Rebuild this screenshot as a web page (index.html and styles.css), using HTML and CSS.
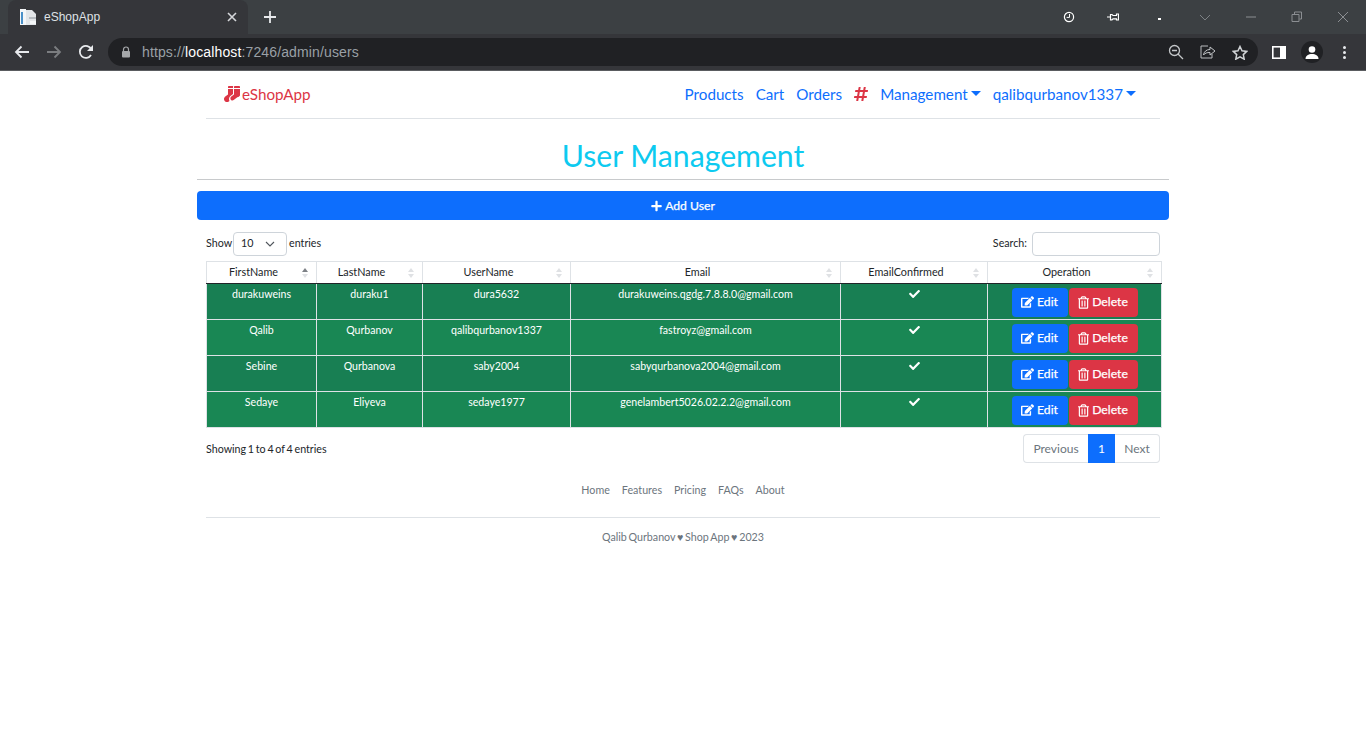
FILE: index.html
```html
<!DOCTYPE html>
<html lang="en">
<head>
<meta charset="utf-8">
<title>eShopApp</title>
<link rel="stylesheet" href="styles.css">
</head>
<body>
<svg class="sprites" xmlns="http://www.w3.org/2000/svg">
  <symbol id="i-socks" viewBox="0 0 512 512"><path fill="currentColor" d="M214.66 311.01L288 256V96H128v176l-86.65 64.61c-39.4 29.56-53.86 84.42-29.21 127.06C30.39 495.25 63.27 512 96.08 512c20.03 0 40.25-6.25 57.52-19.2l21.86-16.39c-29.85-55.38-13.54-125.84 39.2-165.4zM288 32c0-11.05 3.07-21.3 8.03-30.38C293.04.83 289.95 0 286.66 0H160c-17.67 0-32 14.33-32 32v32h160V32zM480 0H352c-17.67 0-32 14.33-32 32v32h192V32c0-17.67-14.33-32-32-32zM320 272l-86.4 64.8c-25.54 19.17-36.6 53.75-24.65 83.21 16.7 41.15 66.3 53.94 101.45 27.59l115.2-86.4A127.997 127.997 0 0 0 512 304V96H320v176z"/></symbol>
  <symbol id="i-hash" viewBox="0 0 448 512"><path fill="currentColor" d="M440.667 182.109l7.143-40c1.313-7.355-4.342-14.109-11.813-14.109h-74.81l14.623-81.891C377.123 38.754 371.468 32 363.997 32h-40.632a12 12 0 0 0-11.813 9.891L296.175 128H197.54l14.623-81.891C213.477 38.754 207.822 32 200.35 32h-40.632a12 12 0 0 0-11.813 9.891L132.528 128H53.432a12 12 0 0 0-11.813 9.891l-7.143 40C33.163 185.246 38.818 192 46.289 192h74.81L98.242 320H19.146a12 12 0 0 0-11.813 9.891l-7.143 40C-1.123 377.246 4.532 384 12.003 384h74.81L72.19 465.891C70.877 473.246 76.532 480 84.003 480h40.632a12 12 0 0 0 11.813-9.891L151.826 384h98.634l-14.623 81.891C234.523 473.246 240.178 480 247.65 480h40.632a12 12 0 0 0 11.813-9.891L315.472 384h79.096a12 12 0 0 0 11.813-9.891l7.143-40c1.313-7.355-4.342-14.109-11.813-14.109h-74.81l22.857-128h79.096a12 12 0 0 0 11.813-9.891zM261.889 320h-98.634l22.857-128h98.634l-22.857 128z"/></symbol>
  <symbol id="i-edit" viewBox="0 0 576 512"><path fill="currentColor" d="M402.6 83.2l90.2 90.2c3.8 3.8 3.8 10 0 13.8L274.4 405.6l-92.8 10.3c-12.4 1.4-22.9-9.1-21.5-21.5l10.3-92.8L388.8 83.2c3.8-3.8 10-3.8 13.8 0zm162-22.9l-48.8-48.8c-15.2-15.2-39.9-15.2-55.2 0l-35.4 35.4c-3.8 3.8-3.8 10 0 13.8l90.2 90.2c3.8 3.8 10 3.8 13.8 0l35.4-35.4c15.2-15.3 15.2-40 0-55.2zM384 346.2V448H64V128h229.8c3.2 0 6.2-1.3 8.5-3.5l40-40c7.6-7.6 2.2-20.5-8.5-20.5H48C21.5 64 0 85.5 0 112v352c0 26.5 21.5 48 48 48h352c26.5 0 48-21.5 48-48V306.2c0-10.7-12.9-16-20.5-8.5l-40 40c-2.2 2.3-3.5 5.3-3.5 8.5z"/></symbol>
  <symbol id="i-trash" viewBox="0 0 448 512"><path fill="currentColor" d="M268 416h24a12 12 0 0 0 12-12V188a12 12 0 0 0-12-12h-24a12 12 0 0 0-12 12v216a12 12 0 0 0 12 12zM432 80h-82.41l-34-56.7A48 48 0 0 0 274.41 0H173.59a48 48 0 0 0-41.16 23.3L98.41 80H16A16 16 0 0 0 0 96v16a16 16 0 0 0 16 16h16v336a48 48 0 0 0 48 48h288a48 48 0 0 0 48-48V128h16a16 16 0 0 0 16-16V96a16 16 0 0 0-16-16zM171.84 50.91A6 6 0 0 1 177 48h94a6 6 0 0 1 5.15 2.91L293.61 80H154.39zM368 464H80V128h288zm-212-48h24a12 12 0 0 0 12-12V188a12 12 0 0 0-12-12h-24a12 12 0 0 0-12 12v216a12 12 0 0 0 12 12z"/></symbol>
  <symbol id="i-check" viewBox="0 0 512 512"><path fill="currentColor" d="M173.898 439.404l-166.4-166.4c-9.997-9.997-9.997-26.206 0-36.204l36.203-36.204c9.997-9.998 26.207-9.998 36.204 0L192 312.69 432.095 72.596c9.997-9.997 26.207-9.997 36.204 0l36.203 36.204c9.997 9.997 9.997 26.206 0 36.204l-294.4 294.401c-9.998 9.997-26.207 9.997-36.204-.001z"/></symbol>
  <symbol id="i-plus" viewBox="0 0 448 512"><path fill="currentColor" d="M416 208H272V64c0-17.67-14.33-32-32-32h-32c-17.67 0-32 14.33-32 32v144H32c-17.67 0-32 14.33-32 32v32c0 17.67 14.33 32 32 32h144v144c0 17.67 14.33 32 32 32h32c17.67 0 32-14.33 32-32V304h144c17.67 0 32-14.33 32-32v-32c0-17.67-14.33-32-32-32z"/></symbol>
</svg>
<div class="browser">
  <div class="tabstrip">
    <div class="tab">
      <svg class="tab-icon" width="16" height="16" viewBox="0 0 16 16"><rect x="0" y="0" width="6" height="16" fill="#f4f6f8"/><rect x="1" y="3" width="2" height="12" fill="#4a90c8"/><path d="M6 1h6l4 4v11H6z" fill="#e3e6e9"/><rect x="9" y="8" width="7" height="2" fill="#b8bdc2"/><rect x="10" y="12" width="6" height="3" fill="#f4f6f8"/></svg>
      <span class="tab-title">eShopApp</span>
      <svg class="tab-close" width="10" height="10" viewBox="0 0 10 10"><path d="M1 1l8 8M9 1l-8 8" stroke="#d5d7da" stroke-width="1.6"/></svg>
    </div>
    <svg class="new-tab" width="14" height="14" viewBox="0 0 14 14"><path d="M7 1v12M1 7h12" stroke="#e8eaed" stroke-width="1.8"/></svg>
    <div class="win-controls">
      <svg class="wi-clock" width="12" height="12" viewBox="0 0 12 12"><circle cx="6" cy="6" r="4.6" fill="none" stroke="#fff" stroke-width="1.2"/><path d="M6.5 3v3.4H3.6" fill="none" stroke="#fff" stroke-width="1"/></svg>
      <svg class="wi-pin" width="12" height="10" viewBox="0 0 12 10"><path d="M0 5h3.500M3.500 2.500h1.500l1 1h3.500V2h2v6h-2V6.800H6l-1 1H3.500z" fill="none" stroke="#fff" stroke-width="1.200"/></svg>
      <span class="wi-dot"></span>
      <svg class="wi-chev" width="12" height="7" viewBox="0 0 12 7"><path d="M1 1l5 5 5-5" fill="none" stroke="#7d8185" stroke-width="1"/></svg>
      <svg class="wi-min" width="12" height="2" viewBox="0 0 12 2"><path d="M1 1h10" stroke="#8b8e92" stroke-width="1"/></svg>
      <svg class="wi-max" width="12" height="12" viewBox="0 0 12 12"><path d="M1 3.500h7v7H1zM3.500 3V1h7v7H8.500" fill="none" stroke="#8b8e92" stroke-width="1"/></svg>
      <svg class="wi-x" width="12" height="12" viewBox="0 0 12 12"><path d="M1 1l10 10M11 1L1 11" stroke="#8b8e92" stroke-width="1"/></svg>
    </div>
  </div>
  <div class="toolbar">
    <svg class="tb-back" width="16" height="14" viewBox="0 0 16 14"><path d="M15 7H2M7.500 1.500L2 7l5.500 5.500" fill="none" stroke="#e8eaed" stroke-width="1.800"/></svg>
    <svg class="tb-fwd" width="16" height="14" viewBox="0 0 16 14"><path d="M1 7h13M8.500 1.500L14 7l-5.500 5.500" fill="none" stroke="#7b7d80" stroke-width="1.800"/></svg>
    <svg class="tb-reload" width="16" height="16" viewBox="0 0 16 16"><path d="M13 11a6 6 0 1 1 .3-5.600" fill="none" stroke="#e8eaed" stroke-width="1.800"/><path d="M15 1v6H9z" fill="#e8eaed"/></svg>
    <div class="omnibox">
      <svg class="lock" width="10" height="12" viewBox="0 0 10 12"><path d="M2.500 5V3.500a2.500 2.500 0 0 1 5 0V5" fill="none" stroke="#a5a7aa" stroke-width="1.200"/><rect x="1" y="5" width="8" height="6.500" rx="1" fill="#a5a7aa"/></svg>
      <span class="url">https://<b class="host">localhost</b>:7246/admin/users</span>
      <div class="omni-icons">
        <svg width="16" height="16" viewBox="0 0 16 16"><circle cx="6.500" cy="6.500" r="5" fill="none" stroke="#c4c7c9" stroke-width="1.300"/><path d="M4 6.500h5M10 10l5 5" stroke="#c4c7c9" stroke-width="1.300"/></svg>
        <svg width="16" height="14" viewBox="0 0 16 14"><path d="M8 1H1v12h11V9" fill="none" stroke="#b8bbbd" stroke-width="1"/><path d="M3.500 10c.5-3.500 3-5.500 6.500-5.500V2l5 4-5 4V7.500C7 7.500 5 8 3.500 10z" fill="#202124" stroke="#c4c7c9" stroke-width="1"/></svg>
        <svg width="16" height="15" viewBox="0 0 16 15"><path d="M8 1.500l2 4.300 4.700.6-3.400 3.200.9 4.600L8 11.900l-4.200 2.300.9-4.600L1.300 6.400 6 5.800z" fill="none" stroke="#d0d3d5" stroke-width="1.500"/></svg>
      </div>
    </div>
    <svg class="tb-side" width="14" height="13" viewBox="0 0 14 13"><rect x="0.800" y="0.800" width="12.400" height="11.400" fill="none" stroke="#fff" stroke-width="1.600"/><rect x="8" y="1" width="5" height="11" fill="#fff"/></svg>
    <div class="avatar"><svg width="14" height="13" viewBox="0 0 14 13"><circle cx="7" cy="3.500" r="3.300" fill="#fff"/><path d="M0.500 13c0-3.500 3-5 6.500-5s6.500 1.500 6.500 5z" fill="#fff"/></svg></div>
    <div class="kebab"><i></i><i></i><i></i></div>
  </div>
</div>

<div class="page">
  <nav class="navbar">
    <a class="brand">
      <svg class="socks"><use href="#i-socks"/></svg>
      <span>eShopApp</span>
    </a>
    <div class="nav-links">
      <a class="nav-link">Products</a>
      <a class="nav-link">Cart</a>
      <a class="nav-link">Orders</a>
      <a class="nav-link nav-hash"><svg class="hash"><use href="#i-hash"/></svg></a>
      <a class="nav-link caret">Management</a>
      <a class="nav-link caret">qalibqurbanov1337</a>
    </div>
  </nav>

  <h1 class="title">User Management</h1>
  <hr class="title-rule">
  <a class="add-btn">
    <svg class="ic-plus"><use href="#i-plus"/></svg>
    <span>Add User</span>
  </a>

  <div class="dt">
    <div class="dt-top">
      <label class="dt-length">Show <span class="select">10<svg class="sel-chev" width="10" height="6" viewBox="0 0 10 6"><path d="M1 1l4 4 4-4" fill="none" stroke="#50565c" stroke-width="1.100"/></svg></span> entries</label>
      <label class="dt-search">Search: <span class="search-input"></span></label>
    </div>
    <table class="users">
      <colgroup><col class="c1"><col class="c2"><col class="c3"><col class="c4"><col class="c5"><col class="c6"></colgroup>
      <thead>
        <tr>
          <th class="sort sort-asc">FirstName</th>
          <th class="sort">LastName</th>
          <th class="sort">UserName</th>
          <th class="sort">Email</th>
          <th class="sort">EmailConfirmed</th>
          <th class="sort">Operation</th>
        </tr>
      </thead>
      <tbody>
        <tr>
          <td>durakuweins</td><td>duraku1</td><td>dura5632</td><td>durakuweins.qgdg.7.8.8.0@gmail.com</td>
          <td><svg class="check"><use href="#i-check"/></svg></td>
          <td class="ops"><a class="btn btn-edit"><svg class="ic-edit"><use href="#i-edit"/></svg>Edit</a><a class="btn btn-del"><svg class="ic-trash"><use href="#i-trash"/></svg>Delete</a></td>
        </tr>
        <tr>
          <td>Qalib</td><td>Qurbanov</td><td>qalibqurbanov1337</td><td>fastroyz@gmail.com</td>
          <td><svg class="check"><use href="#i-check"/></svg></td>
          <td class="ops"><a class="btn btn-edit"><svg class="ic-edit"><use href="#i-edit"/></svg>Edit</a><a class="btn btn-del"><svg class="ic-trash"><use href="#i-trash"/></svg>Delete</a></td>
        </tr>
        <tr>
          <td>Sebine</td><td>Qurbanova</td><td>saby2004</td><td>sabyqurbanova2004@gmail.com</td>
          <td><svg class="check"><use href="#i-check"/></svg></td>
          <td class="ops"><a class="btn btn-edit"><svg class="ic-edit"><use href="#i-edit"/></svg>Edit</a><a class="btn btn-del"><svg class="ic-trash"><use href="#i-trash"/></svg>Delete</a></td>
        </tr>
        <tr>
          <td>Sedaye</td><td>Eliyeva</td><td>sedaye1977</td><td>genelambert5026.02.2.2@gmail.com</td>
          <td><svg class="check"><use href="#i-check"/></svg></td>
          <td class="ops"><a class="btn btn-edit"><svg class="ic-edit"><use href="#i-edit"/></svg>Edit</a><a class="btn btn-del"><svg class="ic-trash"><use href="#i-trash"/></svg>Delete</a></td>
        </tr>
      </tbody>
    </table>
    <div class="dt-bottom">
      <div class="dt-info">Showing 1 to 4 of 4 entries</div>
      <div class="pager">
        <a class="pg pg-prev">Previous</a>
        <a class="pg pg-on">1</a>
        <a class="pg pg-next">Next</a>
      </div>
    </div>
  </div>

  <footer class="footer">
    <div class="foot-links">
      <a>Home</a><a>Features</a><a>Pricing</a><a>FAQs</a><a>About</a>
    </div>
    <p class="foot-text">Qalib Qurbanov ♥ Shop App ♥ 2023</p>
  </footer>
</div>
</body>
</html>
```
FILE: styles.css
```css
* { box-sizing: border-box; }
html, body { margin: 0; padding: 0; background: #fff; }
body { font-family: Lato, "Liberation Sans", sans-serif; color: #212529; height: 738px; overflow: hidden; }
a { text-decoration: none; }
.sprites { display: none; }

.browser { height: 71px; background: #35363a; border-bottom: 1px solid #5a5c60; }
.tabstrip { height: 34px; background: #3c4043; display: flex; align-items: center; }
.tab { width: 240px; height: 34px; margin: 0 0 0 8px; background: #35363a; border-radius: 8px 8px 0 0; display: flex; align-items: center; padding: 0 0 0 12px; }
.tab-icon { margin-right: 8px; }
.tab-title { font: 12px "Liberation Sans", Arial, sans-serif; color: #dfe1e5; width: 183px; }
.new-tab { margin-left: 15px; }
.win-controls { margin-left: auto; display: flex; align-items: center; height: 34px; width: 306px; }
.wi-clock { margin-left: 3px; }
.wi-pin { margin-left: 32px; }
.wi-dot { width: 3px; height: 2px; background: #fff; margin-left: 39px; margin-top: 4px; }
.wi-chev { margin-left: 38px; }
.wi-min { margin-left: 34px; }
.wi-max { margin-left: 34px; }
.wi-x { margin-left: 34px; }

.toolbar { height: 36px; display: flex; align-items: center; }
.tb-back { margin-left: 14px; }
.tb-fwd { margin-left: 16px; }
.tb-reload { margin-left: 16px; }
.omnibox { width: 1150px; height: 28px; margin-left: 14px; background: #202124; border-radius: 14px; display: flex; align-items: center; padding: 0 10px 0 13px; }
.lock { margin-right: 11px; }
.url { font: 14px "Liberation Sans", Arial, sans-serif; color: #9aa0a6; letter-spacing: 0.13px; }
.host { font-weight: 400; color: #fff; }
.omni-icons { margin-left: auto; display: flex; align-items: center; gap: 16px; }
.tb-side { margin-left: 14px; }
.avatar { width: 22px; height: 22px; margin-left: 15px; border-radius: 50%; background: #202124; display: flex; align-items: center; justify-content: center; }
.kebab { margin-left: 20px; display: flex; flex-direction: column; gap: 2px; }
.kebab i { display: block; width: 3px; height: 3px; border-radius: 50%; background: #e8eaed; }

.page { width: 972px; margin: 0 auto; }
.navbar { margin: 0 9px; height: 48px; border-bottom: 1px solid #dee2e6; display: flex; align-items: center; justify-content: space-between; padding: 0 24px 2px 18px; }
.brand { display: flex; align-items: center; gap: 2px; color: #dc3545; font-size: 15.2px; }
.socks { width: 16px; height: 16px; color: #dc3545; }
.nav-links { display: flex; align-items: center; gap: 12px; font-size: 15.2px; }
.nav-link { color: #0d6efd; display: flex; align-items: center; }
.hash { width: 14px; height: 16px; color: #dc3545; display: block; }
.caret::after { content: ""; margin-left: 3px; border-top: 5px solid #0d6efd; border-left: 5px solid transparent; border-right: 5px solid transparent; }

.title { margin: 17px 0 0; height: 38px; line-height: 38px; font-size: 30.2px; font-weight: 400; color: #0dcaf0; text-align: center; }
.title-rule { margin: 5px 0 11px; border: 0; border-top: 1px solid #c8cacc; }
.add-btn { display: flex; align-items: center; justify-content: center; gap: 3px; height: 29px; background: #0d6efd; color: #fff; border-radius: 4px; font-size: 12.200px; -webkit-text-stroke: 0.25px #fff; }
.ic-plus { width: 11px; height: 12px; color: #fff; }

.dt { margin: 12px 0 0; padding: 0 7px 0 9px; font-size: 10.700px; }
.dt-top { display: flex; justify-content: space-between; align-items: center; height: 24px; padding-right: 2px; margin-bottom: 5px; color: #212529; }
.dt-length, .dt-search { display: flex; align-items: flex-start; gap: 2px; line-height: 22px; height: 24px; }
.dt-search { gap: 5px; }
.select { width: 54px; height: 24px; margin-left: -1px; border: 1px solid #ced4da; border-radius: 4px; display: flex; align-items: flex-start; justify-content: space-between; padding: 0 11px 0 7px; line-height: 20px; font-size: 10.700px; color: #212529; }
.sel-chev { align-self: center; }
.search-input { display: block; width: 128px; height: 24px; border: 1px solid #ced4da; border-radius: 4px; }

.users { width: 955px; table-layout: fixed; border-collapse: collapse; font-size: 10.600px; }
.c1 { width: 110px; } .c2 { width: 106px; } .c3 { width: 148px; } .c4 { width: 270px; } .c5 { width: 147px; } .c6 { width: 174px; }
.users th { height: 22px; padding: 0 20px 2px 4px; font-weight: 400; text-align: center; color: #212529; border: 1px solid #dee2e6; border-bottom: 1px solid #212529; position: relative; font-size: 10.800px; }
.sort::before, .sort::after { content: ""; position: absolute; right: 8px; border-left: 3px solid transparent; border-right: 3px solid transparent; }
.sort::before { top: 6px; border-bottom: 4px solid #dfe1e4; }
.sort::after { top: 12px; border-top: 4px solid #dfe1e4; }
.sort-asc::before { border-bottom-color: #7d8186; }
.users td { height: 36px; padding: 3px 4px 0; vertical-align: top; text-align: center; color: #fff; background: #198754; border: 1px solid #dee2e6; line-height: 14px; }
.users tbody tr:nth-child(odd) td { background: #187f53; }
.users td.ops { padding: 4px 0 0; }
.check { width: 11px; height: 12px; color: #fff; margin-top: 1px; }
.btn { display: inline-flex; align-items: center; justify-content: center; gap: 3px; height: 29px; padding-bottom: 1px; border-radius: 4px; color: #fff; font-size: 12.200px; -webkit-text-stroke: 0.25px #fff; vertical-align: top; }
.btn-edit { width: 56px; background: #0d6efd; margin-right: 1px; }
.btn-del { width: 69px; background: #dc3545; }
.ic-edit { width: 13px; height: 12px; color: #fff; }
.ic-trash { width: 11px; height: 13px; color: #fff; }

.dt-bottom { display: flex; justify-content: space-between; align-items: flex-start; margin-top: 6px; padding-right: 2px; }
.dt-info { line-height: 30px; word-spacing: -1px; }
.pager { display: flex; height: 29px; font-size: 12px; }
.pg { display: flex; align-items: center; justify-content: center; border: 1px solid #dee2e6; color: #6c757d; }
.pg-prev { width: 65px; border-radius: 4px 0 0 4px; border-right: 0; }
.pg-on { width: 27px; background: #0d6efd; border-color: #0d6efd; color: #fff; }
.pg-next { width: 45px; border-radius: 0 4px 4px 0; border-left: 0; }

.footer { margin: 0 9px; }
.foot-links { margin-top: 17px; height: 37px; border-bottom: 1px solid #dee2e6; display: flex; justify-content: center; gap: 12px; font-size: 10.700px; line-height: 17px; }
.foot-links a { color: #6c757d; }
.foot-text { margin: 11px 0 0; text-align: center; font-size: 10.700px; line-height: 15px; color: #6c757d; word-spacing: -1px; }
```
